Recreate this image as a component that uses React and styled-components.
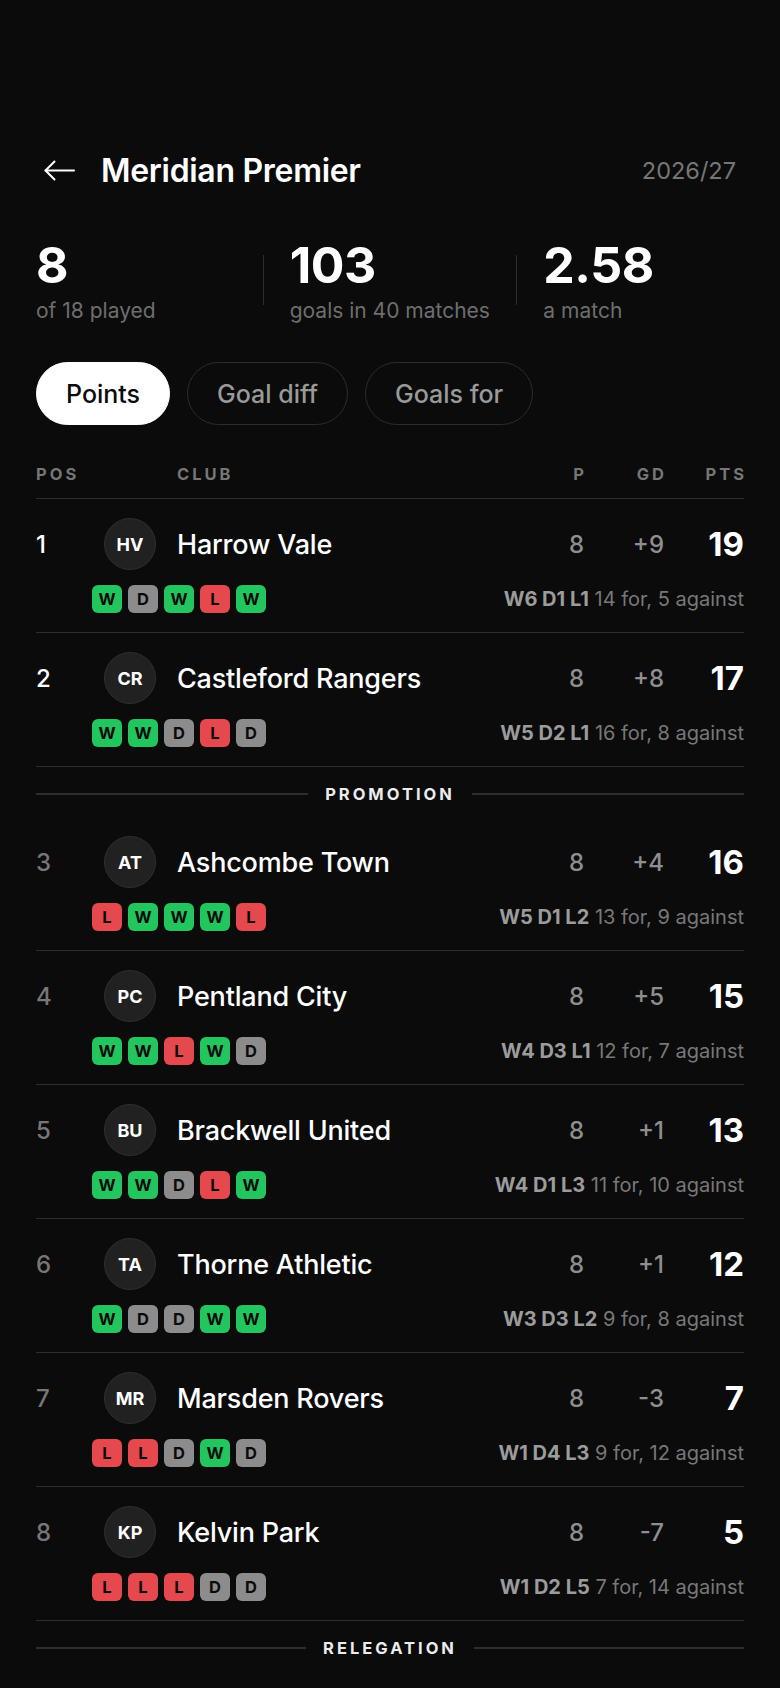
import React, { useState } from 'react'
import styled, { createGlobalStyle } from 'styled-components'

const GlobalStyle = createGlobalStyle`
  html, body {
    margin: 0;
    padding: 0;
    background: #0b0b0b;
  }
  body {
    font-family: Inter, 'Noto Sans', sans-serif;
    color: #fff;
    -webkit-font-smoothing: antialiased;
  }
`

const FORM_COLORS = {
  W: '#22c55e',
  D: '#8c8c8c',
  L: '#e5484d',
}

const clubs = [
  { pos: 1, code: 'HV', name: 'Harrow Vale', p: 8, gd: '+9', pts: 19, form: 'WDWLW', rec: 'W6 D1 L1', goals: '14 for, 5 against', top: true },
  { pos: 2, code: 'CR', name: 'Castleford Rangers', p: 8, gd: '+8', pts: 17, form: 'WWDLD', rec: 'W5 D2 L1', goals: '16 for, 8 against', top: true, after: 'PROMOTION' },
  { pos: 3, code: 'AT', name: 'Ashcombe Town', p: 8, gd: '+4', pts: 16, form: 'LWWWL', rec: 'W5 D1 L2', goals: '13 for, 9 against' },
  { pos: 4, code: 'PC', name: 'Pentland City', p: 8, gd: '+5', pts: 15, form: 'WWLWD', rec: 'W4 D3 L1', goals: '12 for, 7 against' },
  { pos: 5, code: 'BU', name: 'Brackwell United', p: 8, gd: '+1', pts: 13, form: 'WWDLW', rec: 'W4 D1 L3', goals: '11 for, 10 against' },
  { pos: 6, code: 'TA', name: 'Thorne Athletic', p: 8, gd: '+1', pts: 12, form: 'WDDWW', rec: 'W3 D3 L2', goals: '9 for, 8 against' },
  { pos: 7, code: 'MR', name: 'Marsden Rovers', p: 8, gd: '-3', pts: 7, form: 'LLDWD', rec: 'W1 D4 L3', goals: '9 for, 12 against' },
  { pos: 8, code: 'KP', name: 'Kelvin Park', p: 8, gd: '-7', pts: 5, form: 'LLLDD', rec: 'W1 D2 L5', goals: '7 for, 14 against', after: 'RELEGATION' },
]

const Page = styled.div`
  padding: 146px 36px 0;
  min-height: 1688px;
  box-sizing: border-box;
`

const Header = styled.header`
  display: flex;
  align-items: center;
  height: 48px;
`

const BackButton = styled.button`
  display: flex;
  align-items: center;
  justify-content: center;
  background: none;
  border: none;
  padding: 0;
  margin: 0 26px 0 8px;
  color: #fff;
  cursor: pointer;
`

const Title = styled.h1`
  flex: 1;
  margin: 0;
  font-size: 32px;
  font-weight: 600;
  letter-spacing: -0.3px;
`

const Season = styled.span`
  font-size: 23.5px;
  color: #767676;
  margin-right: 8px;
`

const Stats = styled.section`
  display: flex;
  margin-top: 46px;
`

const Stat = styled.div`
  flex: 1;
  min-width: 0;
`

const StatValue = styled.div`
  font-size: 50px;
  line-height: 50px;
  font-weight: 700;
  letter-spacing: -0.5px;
`

const StatLabel = styled.div`
  margin-top: 7px;
  font-size: 21px;
  line-height: 28px;
  color: #6e6e6e;
`

const StatDivider = styled.div`
  width: 1px;
  height: 50px;
  margin: 15px 26px 0;
  background: #2e2e2e;
`

const Chips = styled.nav`
  display: flex;
  gap: 17px;
  margin-top: 37px;
`

const Chip = styled.button`
  height: 63px;
  padding: 0 29px;
  border-radius: 32px;
  font-family: inherit;
  font-size: 25px;
  font-weight: 500;
  cursor: pointer;
  border: 1.5px solid ${({ $active }) => ($active ? '#fff' : '#2c2c2c')};
  background: ${({ $active }) => ($active ? '#fff' : 'transparent')};
  color: ${({ $active }) => ($active ? '#0b0b0b' : '#9a9a9a')};
`

const TableHead = styled.div`
  display: flex;
  align-items: center;
  margin-top: 39px;
  padding-bottom: 14px;
  border-bottom: 1.5px solid #2e2e2e;
  font-size: 16.5px;
  line-height: 20px;
  font-weight: 700;
  letter-spacing: 3px;
  color: #767676;
`

const HeadPos = styled.span`
  width: 141px;
`

const HeadClub = styled.span`
  flex: 1;
`

const NumCol = styled.span`
  width: 80px;
  text-align: right;
  flex-shrink: 0;
`

const HeadNum = styled(NumCol)`
  margin: 0 -3px 0 3px;
`

const Row = styled.div`
  padding: 19px 0 19px;
  border-bottom: 1.5px solid #2e2e2e;
`

const RowTop = styled.div`
  display: flex;
  align-items: center;
  height: 52px;
`

const Pos = styled.span`
  width: 68px;
  font-size: 24px;
  font-weight: 500;
  color: ${({ $top }) => ($top ? '#fff' : '#777')};
`

const Avatar = styled.div`
  width: 50px;
  height: 50px;
  border-radius: 50%;
  background: #212121;
  border: 1.5px solid #2f2f2f;
  display: flex;
  align-items: center;
  justify-content: center;
  font-size: 18px;
  font-weight: 700;
  margin-right: 21px;
  flex-shrink: 0;
`

const Name = styled.span`
  flex: 1;
  font-size: 27px;
  font-weight: 500;
  letter-spacing: -0.2px;
`

const Num = styled(NumCol)`
  font-size: 24px;
  font-weight: 500;
  color: #8f8f8f;
`

const Pts = styled(NumCol)`
  font-size: 33px;
  font-weight: 700;
  color: #fff;
`

const RowBottom = styled.div`
  display: flex;
  align-items: center;
  justify-content: space-between;
  margin-top: 15px;
  padding-left: 56px;
`

const Form = styled.div`
  display: flex;
  gap: 6px;
`

const Badge = styled.span`
  width: 30px;
  height: 28px;
  border-radius: 6px;
  display: flex;
  align-items: center;
  justify-content: center;
  font-size: 16.5px;
  font-weight: 700;
  color: #0b0b0b;
  background: ${({ $r }) => FORM_COLORS[$r]};
`

const Summary = styled.span`
  font-size: 20px;
  color: #787878;
`

const Record = styled.b`
  font-weight: 700;
  color: #9c9c9c;
`

const Zone = styled.div`
  display: flex;
  align-items: center;
  gap: 17px;
  padding: 17px 0 13px;
  font-size: 16.5px;
  line-height: 20px;
  font-weight: 700;
  letter-spacing: 3px;
  color: #ececec;

  &::before,
  &::after {
    content: '';
    flex: 1;
    height: 1.5px;
    background: #2e2e2e;
  }
`

const BackArrow = () => (
  <svg width="31" height="21" viewBox="0 0 31 21" fill="none" stroke="currentColor" strokeWidth="2" strokeLinecap="round" strokeLinejoin="round">
    <path d="M30 10.5H1.5" />
    <path d="M10.5 1.5L1.5 10.5L10.5 19.5" />
  </svg>
)

export default function App() {
  const [sort, setSort] = useState('Points')

  return (
    <>
      <GlobalStyle />
      <Page>
        <Header>
          <BackButton aria-label="Back"><BackArrow /></BackButton>
          <Title>Meridian Premier</Title>
          <Season>2026/27</Season>
        </Header>

        <Stats>
          <Stat>
            <StatValue>8</StatValue>
            <StatLabel>of 18 played</StatLabel>
          </Stat>
          <StatDivider />
          <Stat>
            <StatValue>103</StatValue>
            <StatLabel>goals in 40 matches</StatLabel>
          </Stat>
          <StatDivider />
          <Stat>
            <StatValue>2.58</StatValue>
            <StatLabel>a match</StatLabel>
          </Stat>
        </Stats>

        <Chips>
          {['Points', 'Goal diff', 'Goals for'].map(c => (
            <Chip key={c} $active={sort === c} onClick={() => setSort(c)}>{c}</Chip>
          ))}
        </Chips>

        <TableHead>
          <HeadPos>POS</HeadPos>
          <HeadClub>CLUB</HeadClub>
          <HeadNum>P</HeadNum>
          <HeadNum>GD</HeadNum>
          <HeadNum>PTS</HeadNum>
        </TableHead>

        {clubs.map(c => (
          <React.Fragment key={c.code}>
            <Row>
              <RowTop>
                <Pos $top={c.top}>{c.pos}</Pos>
                <Avatar>{c.code}</Avatar>
                <Name>{c.name}</Name>
                <Num>{c.p}</Num>
                <Num>{c.gd}</Num>
                <Pts>{c.pts}</Pts>
              </RowTop>
              <RowBottom>
                <Form>
                  {c.form.split('').map((r, i) => <Badge key={i} $r={r}>{r}</Badge>)}
                </Form>
                <Summary><Record>{c.rec}</Record> {c.goals}</Summary>
              </RowBottom>
            </Row>
            {c.after && <Zone>{c.after}</Zone>}
          </React.Fragment>
        ))}
      </Page>
    </>
  )
}
